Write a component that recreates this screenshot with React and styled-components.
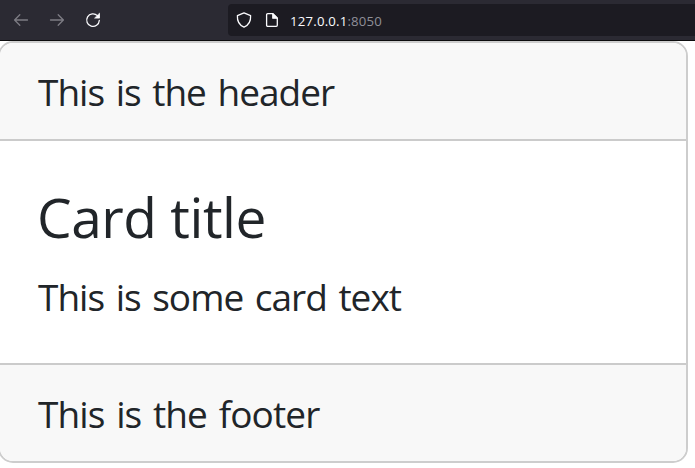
import React from "react";
import styled, { createGlobalStyle } from "styled-components";

const GlobalStyle = createGlobalStyle`
  * { box-sizing: border-box; }
  body { margin: 0; background: #fff; overflow: hidden; }
`;

const Page = styled.div`
  width: 100%;
  height: 468px;
  overflow: hidden;
  font-family: "Open Sans", "Noto Sans", sans-serif;
`;

const Toolbar = styled.div`
  display: flex;
  align-items: center;
  height: 41px;
  padding-left: 13px;
  background: #2b2a33;
  border-bottom: 1px solid #0c0c0d;
`;

const NavButtons = styled.div`
  display: flex;
  gap: 20px;
  width: 215px;
`;

const Icon = styled.svg`
  display: block;
  flex: none;
  width: 16px;
  height: 16px;
  fill: none;
  stroke: ${(p) => (p.$muted ? "#7d7c84" : "#fbfbfe")};
  stroke-width: 1.3;
  stroke-linecap: round;
  stroke-linejoin: round;
`;

const AddressBar = styled.div`
  display: flex;
  flex: 1;
  align-items: center;
  gap: 12px;
  height: 32px;
  padding-left: 8px;
  border-radius: 4px 0 0 4px;
  background: #1c1b22;
`;

const Address = styled.span`
  margin: 1px 0 0 -2px;
  font-size: 13.2px;
  line-height: 18px;
  letter-spacing: 0.2px;
  color: #fbfbfe;
`;

const Port = styled.span`
  color: #8f8f98;
`;

const Card = styled.article`
  width: 690px;
  height: 422px;
  margin-left: -2px;
  overflow: hidden;
  display: flex;
  flex-direction: column;
  border: 2px solid #cdcdcd;
  border-radius: 15px;
  color: #212529;
  background: #fff;
`;

const CardHeader = styled.header`
  height: 98px;
  padding: 23px 38px;
  border-bottom: 2px solid #cbcbcb;
  background: #f8f8f8;
`;

const CardBody = styled.div`
  flex: 1;
  padding: 42px 38px 0;
`;

const CardFooter = styled.footer`
  height: 98px;
  padding: 23px 38px;
  border-top: 2px solid #cbcbcb;
  background: #f8f8f8;
`;

const Title = styled.h4`
  margin: 0 0 20px -1px;
  font-size: 55px;
  font-weight: 400;
  line-height: 68px;
  letter-spacing: -0.45px;
`;

const Text = styled.p`
  margin: 0;
  font-size: 37px;
  line-height: 52px;
  letter-spacing: ${(p) => p.$tracking};
  word-spacing: 3px;
  white-space: nowrap;
`;

export default function App() {
  return (
    <Page>
      <GlobalStyle />
      <Toolbar>
        <NavButtons>
          <Icon $muted viewBox="0 0 16 16">
            <path d="M14.5 8H1.8M6.8 2.8 1.6 8l5.2 5.2" />
          </Icon>
          <Icon $muted viewBox="0 0 16 16">
            <path d="M1.5 8h12.7M9.2 2.8 14.4 8l-5.2 5.2" />
          </Icon>
          <Icon viewBox="0 0 16 16">
            <path d="M12.4 3.6A6.3 6.3 0 1 0 14.3 8.5" />
            <path d="M14.5 1.6v4.5H10z" fill="#fbfbfe" strokeWidth="0.8" />
          </Icon>
        </NavButtons>
        <AddressBar>
          <Icon viewBox="0 0 16 16">
            <path d="M8 .9 14.6 3.7c.3 4.7-1.8 9.3-6.6 11.4C3.2 13 1.1 8.4 1.4 3.7z" />
          </Icon>
          <Icon viewBox="0 0 16 16">
            <path d="M3.7 1.7h5.1l4.5 4.5v7a1.1 1.1 0 0 1-1.1 1.1H3.7a1.1 1.1 0 0 1-1.1-1.1V2.8a1.1 1.1 0 0 1 1.1-1.1z" />
            <path d="M8.8 1.7v4.5h4.5z" fill="#fbfbfe" />
          </Icon>
          <Address>
            127.0.0.1<Port>:8050</Port>
          </Address>
        </AddressBar>
      </Toolbar>
      <Card>
        <CardHeader>
          <Text $tracking="-1px">This is the header</Text>
        </CardHeader>
        <CardBody>
          <Title>Card title</Title>
          <Text $tracking="-1px">This is some card text</Text>
        </CardBody>
        <CardFooter>
          <Text $tracking="-0.9px">This is the footer</Text>
        </CardFooter>
      </Card>
    </Page>
  );
}
